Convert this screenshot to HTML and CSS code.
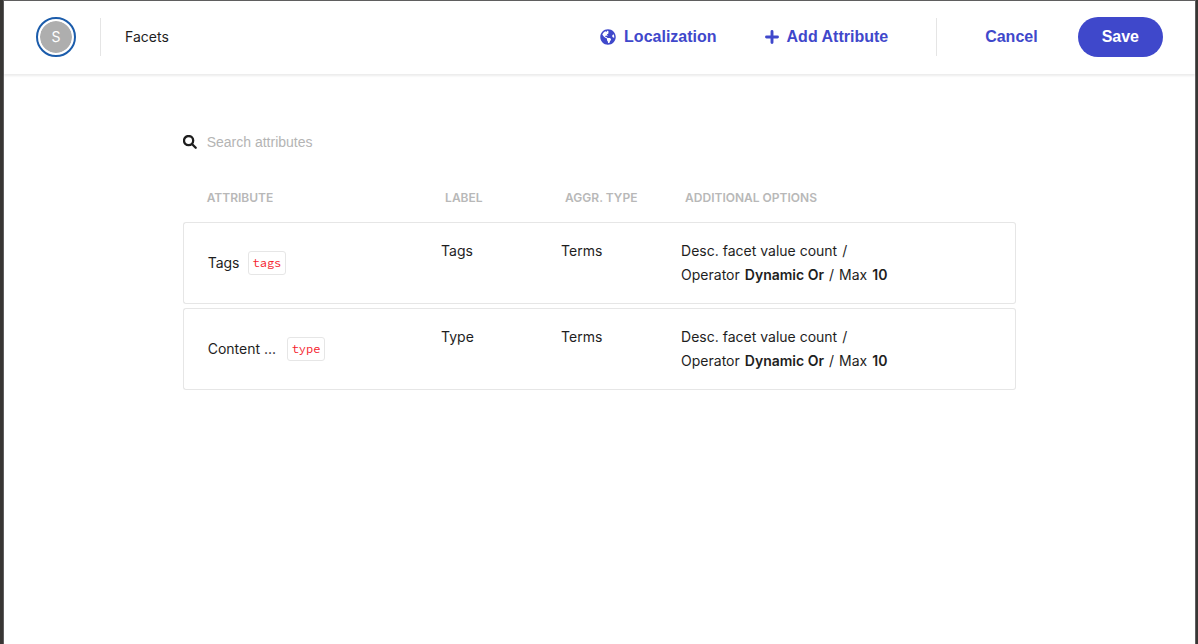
FILE: index.html
```html
<!DOCTYPE html>
<html lang="en">
<head>
<meta charset="utf-8">
<meta name="viewport" content="width=device-width, initial-scale=1">
<title>Facets</title>
<link rel="stylesheet" href="styles.css">
</head>
<body>
<div class="modal">
  <header class="topbar">
    <div class="avatar">S</div>
    <h1 class="title">Facets</h1>
    <div class="tools">
      <button type="button" class="link-button">
        <svg class="icon-globe" viewBox="0 0 496 512" aria-hidden="true"><path fill="currentColor" d="M248 8C111.030 8 0 119.030 0 256s111.030 248 248 248 248-111.030 248-248S384.970 8 248 8zm82.290 357.600c-3.900 3.880-7.990 7.950-11.310 11.280-2.990 3-5.100 6.700-6.170 10.710-1.510 5.660-2.730 11.380-4.770 16.870l-17.390 46.850c-13.760 3-28 4.690-42.650 4.690v-27.380c1.690-12.620-7.640-36.260-22.630-51.250-6-6-9.370-14.140-9.370-22.630v-32.010c0-11.640-6.270-22.340-16.460-27.970-14.370-7.950-34.810-19.060-48.810-26.110-11.480-5.780-22.100-13.140-31.650-21.750l-.8-.72a114.792 114.792 0 0 1-18.060-20.740c-9.380-13.770-24.660-36.420-34.590-51.140 20.470-45.500 57.360-82.040 103.200-101.890l24.010 12.010C203.480 89.740 216 82.010 216 70.110v-11.300c7.990-1.290 16.120-2.110 24.390-2.420l28.300 28.300c6.250 6.250 6.250 16.380 0 22.630L264 112l-10.340 10.340c-3.120 3.120-3.120 8.190 0 11.310l4.690 4.690c3.120 3.120 3.120 8.190 0 11.310l-8 8a8.008 8.008 0 0 1-5.660 2.340h-8.990c-2.080 0-4.080.81-5.580 2.270l-9.920 9.650a8.001 8.001 0 0 0-1.580 9.310l15.590 31.190c2.660 5.320-1.210 11.580-7.150 11.580h-5.640c-1.930 0-3.790-.7-5.240-1.960l-9.280-8.060a16.017 16.017 0 0 0-15.550-3.100l-31.170 10.390a11.950 11.950 0 0 0-8.170 11.340c0 4.530 2.560 8.660 6.610 10.690l11.080 5.540c9.410 4.710 19.790 7.160 30.310 7.160s22.590 27.290 32 32h66.750c8.490 0 16.620 3.370 22.630 9.370l13.690 13.690a30.503 30.503 0 0 1 8.930 21.570 46.536 46.536 0 0 1-13.720 32.980zM417 274.250c-5.790-1.450-10.840-5-14.150-9.970l-17.980-26.970a23.970 23.970 0 0 1 0-26.620l19.590-29.380c2.320-3.470 5.500-6.290 9.240-8.150l12.980-6.490C440.200 193.590 448 223.870 448 256c0 8.670-.74 17.160-1.820 25.540L417 274.250z"/></svg>
        Localization
      </button>
      <button type="button" class="link-button">
        <svg class="icon-plus" viewBox="0 0 14 14" aria-hidden="true"><path d="M7 1.500v11M1.500 7h11" fill="none" stroke="currentColor" stroke-width="2.900" stroke-linecap="round"/></svg>
        Add Attribute
      </button>
    </div>
    <div class="actions">
      <button type="button" class="link-button">Cancel</button>
      <button type="button" class="save-button">Save</button>
    </div>
  </header>
  <main class="content">
    <label class="search">
      <svg class="icon-search" viewBox="0 0 14 14" aria-hidden="true"><path d="M9.200 9.200L12.700 12.700M10.200 5.600a4.600 4.600 0 1 1-9.200 0a4.600 4.600 0 0 1 9.200 0z" fill="none" stroke="currentColor" stroke-width="2.300" stroke-linecap="round"/></svg>
      <input class="search-input" type="text" placeholder="Search attributes" aria-label="Search attributes">
    </label>
    <table class="facets">
      <colgroup><col class="col-attribute"><col class="col-label"><col class="col-type"><col></colgroup>
      <thead>
        <tr><th scope="col">Attribute</th><th scope="col">Label</th><th scope="col">Aggr. type</th><th scope="col">Additional options</th></tr>
      </thead>
      <tbody>
        <tr>
          <td><div class="attribute"><span>Tags</span><code class="key">tags</code></div></td>
          <td>Tags</td>
          <td>Terms</td>
          <td><div class="options"><span>Desc. facet value count</span><span>/</span></div><div class="options"><span>Operator</span><strong>Dynamic Or</strong><span>/</span><span>Max</span><strong>10</strong></div></td>
        </tr>
        <tr>
          <td><div class="attribute"><span class="name-short">Content ...</span><code class="key">type</code></div></td>
          <td>Type</td>
          <td>Terms</td>
          <td><div class="options"><span>Desc. facet value count</span><span>/</span></div><div class="options"><span>Operator</span><strong>Dynamic Or</strong><span>/</span><span>Max</span><strong>10</strong></div></td>
        </tr>
      </tbody>
    </table>
  </main>
</div>
</body>
</html>
```
FILE: styles.css
```css
* {
  box-sizing: border-box;
}

body {
  margin: 0;
  padding: 0 2px 0 3px;
  background: #383634;
  color: #1e1e1e;
  font: 14px/24px Inter, "Liberation Sans", sans-serif;
}

.modal {
  min-height: 100vh;
  background: #fff;
  border: 1px solid #5f5e5f;
  border-bottom: 0;
}

.topbar {
  display: flex;
  align-items: center;
  padding: 16px 32px 17px;
  box-shadow: 0 2px 2px rgba(0, 0, 0, 0.08);
}

.avatar {
  width: 40px;
  height: 40px;
  padding: 2px;
  border: 2px solid #1b5cab;
  border-radius: 50%;
  background: #aeaeae;
  background-clip: content-box;
  color: #fff;
  line-height: 32px;
  text-align: center;
  box-shadow: inset 0 0 0 2px #fff;
}

.title {
  margin: 0 0 0 24px;
  padding-left: 24px;
  border-left: 1px solid #e5e5e5;
  font-size: 14px;
  font-weight: 400;
  line-height: 38px;
}

.tools {
  display: flex;
  gap: 48px;
  margin-left: auto;
  padding-right: 48px;
  border-right: 1px solid #e5e5e5;
  line-height: 38px;
}

.actions {
  display: flex;
  align-items: center;
  gap: 40px;
  padding-left: 48px;
}

button {
  padding: 0;
  border: 0;
  background: none;
  font: bold 16px/38px "Liberation Sans", Arial, sans-serif;
  cursor: pointer;
}

.link-button {
  display: flex;
  align-items: center;
  gap: 8px;
  color: #3f48cb;
}

.icon-globe {
  width: 16px;
  height: 16px;
}

.icon-plus,
.icon-search {
  flex: none;
  width: 14px;
  height: 14px;
}

.save-button {
  padding: 0 24px;
  border-radius: 20px;
  background: #3f48cb;
  color: #fff;
  line-height: 40px;
}

.content {
  width: 70%;
  margin: 0 auto;
  padding: 56px 0;
}

.search {
  display: flex;
  align-items: center;
  gap: 10px;
}

.search-input {
  flex: 1;
  height: 24px;
  padding: 0;
  border: 0;
  outline: 0;
  background: none;
  color: inherit;
  font: 14px "Liberation Sans", Arial, sans-serif;
}

.search-input::placeholder {
  color: #b4b4b4;
}

.facets {
  width: 100%;
  margin-top: 28px;
  border-collapse: separate;
  border-spacing: 0 4px;
  table-layout: fixed;
}

.col-attribute {
  width: 31%;
}

.col-label,
.col-type {
  width: 120px;
}

th {
  padding: 0 4px 8px;
  color: #b8b8b8;
  font-size: 12px;
  font-weight: 600;
  text-align: left;
  text-transform: uppercase;
}

th:first-child {
  padding-left: 24px;
}

td {
  padding: 16px 0;
  border: 1px solid #e6e6e6;
  border-width: 1px 0;
  vertical-align: top;
}

td:first-child {
  padding-left: 24px;
  border-left-width: 1px;
  border-radius: 3px 0 0 3px;
  vertical-align: middle;
}

td:last-child {
  border-right-width: 1px;
  border-radius: 0 3px 3px 0;
}

.attribute {
  display: flex;
  align-items: center;
  gap: 8px;
}

.name-short {
  width: 71px;
}

.key {
  padding: 0 4px;
  border: 1px solid #e6e6e6;
  border-radius: 3px;
  color: #f5222d;
  font: 12px/22px "Source Code Pro", "Liberation Mono", monospace;
}

.options {
  display: flex;
  gap: 5px;
}

strong {
  font-weight: 600;
}
```
